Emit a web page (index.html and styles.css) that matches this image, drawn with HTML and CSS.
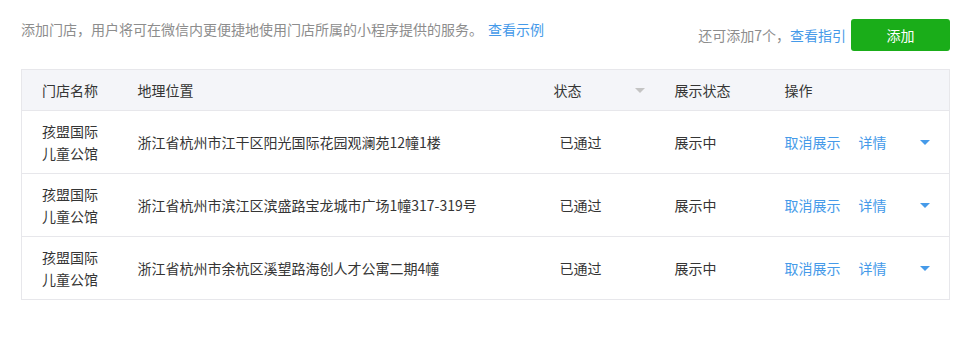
FILE: index.html
```html
<!DOCTYPE html>
<html lang="zh-CN">
<head>
<meta charset="utf-8">
<title>门店管理</title>
<link rel="stylesheet" href="styles.css">
</head>
<body>
<div class="page">
  <div class="topbar">
    <p class="desc">添加门店，用户将可在微信内更便捷地使用门店所属的小程序提供的服务。<a class="link desc-link" href="#">查看示例</a></p>
    <div class="actions">
      <span class="remain">还可添加7个，<a class="link" href="#">查看指引</a></span>
      <button class="btn-add" type="button">添加</button>
    </div>
  </div>
  <table class="store-table">
    <thead>
      <tr>
        <th class="c-name">门店名称</th>
        <th class="c-addr">地理位置</th>
        <th class="c-status"><span class="status-head">状态<i class="tri tri-gray"></i></span></th>
        <th class="c-show">展示状态</th>
        <th class="c-op">操作</th>
      </tr>
    </thead>
    <tbody>
      <tr>
        <td class="c-name"><span class="name">孩盟国际儿童公馆</span></td>
        <td class="c-addr">浙江省杭州市江干区阳光国际花园观澜苑12幢1楼</td>
        <td class="c-status status-cell">已通过</td>
        <td class="c-show">展示中</td>
        <td class="c-op"><div class="ops"><a class="link" href="#">取消展示</a><a class="link detail" href="#">详情</a><i class="tri tri-blue"></i></div></td>
      </tr>
      <tr>
        <td class="c-name"><span class="name">孩盟国际儿童公馆</span></td>
        <td class="c-addr">浙江省杭州市滨江区滨盛路宝龙城市广场1幢317-319号</td>
        <td class="c-status status-cell">已通过</td>
        <td class="c-show">展示中</td>
        <td class="c-op"><div class="ops"><a class="link" href="#">取消展示</a><a class="link detail" href="#">详情</a><i class="tri tri-blue"></i></div></td>
      </tr>
      <tr>
        <td class="c-name"><span class="name">孩盟国际儿童公馆</span></td>
        <td class="c-addr">浙江省杭州市余杭区溪望路海创人才公寓二期4幢</td>
        <td class="c-status status-cell">已通过</td>
        <td class="c-show">展示中</td>
        <td class="c-op"><div class="ops"><a class="link" href="#">取消展示</a><a class="link detail" href="#">详情</a><i class="tri tri-blue"></i></div></td>
      </tr>
    </tbody>
  </table>
</div>
</body>
</html>
```
FILE: styles.css
```css
* { box-sizing: border-box; }
html, body { margin: 0; padding: 0; background: #fff; }
body {
  font-family: "Microsoft YaHei", "Noto Sans CJK SC", "Noto Sans", sans-serif;
  font-size: 14px;
  color: #353535;
}
.page {
  width: 929px;
  margin-left: 21px;
  padding-top: 19px;
}
.topbar {
  display: flex;
  justify-content: space-between;
  align-items: flex-start;
  height: 32px;
}
.desc {
  margin: 0;
  line-height: 20px;
  color: #8d8d8d;
}
.link { color: #459ae9; text-decoration: none; }
.desc-link { margin-left: 5px; }
.actions {
  display: flex;
  align-items: center;
  gap: 5px;
  height: 32px;
}
.remain { color: #8d8d8d; line-height: 20px; }
.btn-add {
  width: 99px;
  height: 32px;
  border: 0;
  border-radius: 3px;
  background: #1aad19;
  color: #fff;
  font: inherit;
  font-size: 14px;
  padding: 0;
}
.store-table {
  margin-top: 18px;
  width: 929px;
  border-collapse: collapse;
  border: 1px solid #e7e7eb;
  table-layout: fixed;
}
.store-table th, .store-table td {
  text-align: left;
  font-weight: normal;
  padding: 0 0 0 20px;
  border-bottom: 1px solid #e7e7eb;
  line-height: 22px;
}
.store-table th {
  background: #f4f5f9;
  height: 41px;
}
.store-table td { height: 63px; }
.c-name { width: 96px; }
.c-addr { width: 416px; }
.c-status { width: 121px; }
.c-show { width: 110px; }
.name { display: block; width: 58px; }
.status-head {
  display: flex;
  align-items: center;
  justify-content: space-between;
  padding-right: 10px;
}
.store-table td.status-cell { padding-left: 26px; }
.tri {
  display: inline-block;
  width: 0;
  height: 0;
  border-left: 5px solid transparent;
  border-right: 5px solid transparent;
  border-top: 5px solid #c4c4c4;
}
.tri-blue { border-top-color: #459ae9; margin-left: auto; margin-right: 19px; }
.ops { display: flex; align-items: center; }
.detail { margin-left: 18px; }
```
